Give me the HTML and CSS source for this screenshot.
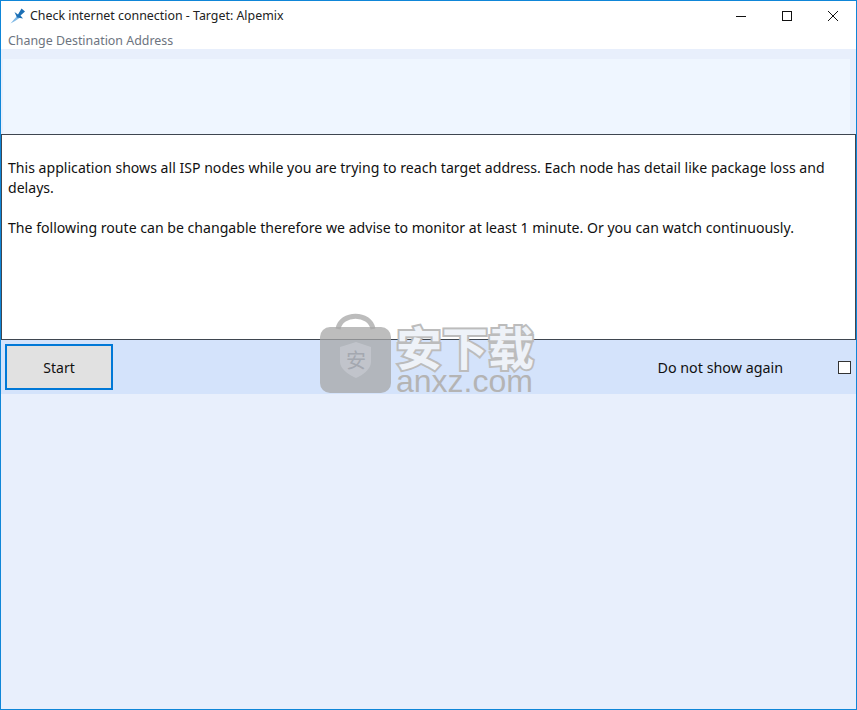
FILE: index.html
```html
<!DOCTYPE html>
<html lang="en">
<head>
  <meta charset="UTF-8">
  <title>Check internet connection - Target: Alpemix</title>
  <link rel="stylesheet" href="styles.css">
</head>
<body>
  <div class="window">
    <div class="titlebar">
      <svg class="app-icon" width="16" height="16" viewBox="0 0 16 16">
        <path d="M0.500 15.500 C3 12.500 5 10.500 7 8 L9.500 10 C6.500 12 3.500 14 0.500 15.500Z" fill="#7fb9e6"/>
        <path d="M4.500 4 L8 6.500 L11.500 0.500 L15 3.500 L10.500 7.500 L13 10.500 L7 9.500Z" fill="#1b6fb5"/>
      </svg>
      <span class="title">Check internet connection - Target: Alpemix</span>
      <div class="win-controls">
        <svg width="46" height="30" viewBox="0 0 46 30"><path d="M18 15.500H28" stroke="#111" fill="none"/></svg>
        <svg width="46" height="30" viewBox="0 0 46 30"><rect x="18.500" y="10.500" width="9" height="9" stroke="#111" fill="none"/></svg>
        <svg width="46" height="30" viewBox="0 0 46 30"><path d="M18 10L28 20M28 10L18 20" stroke="#111" fill="none"/></svg>
      </div>
    </div>
    <div class="menu">Change Destination Address</div>
    <div class="content">
      <div class="top-panel"></div>
      <div class="message">
        <p>This application shows all ISP nodes while you are trying to reach target address. Each node has detail like package loss and delays.</p>
        <p>The following route can be changable therefore we advise to monitor at least 1 minute. Or you can watch continuously.</p>
      </div>
      <div class="actions">
        <button class="start">Start</button>
        <label class="dont-show">Do not show again</label>
        <span class="check"></span>
      </div>
    </div>
    <div class="watermark">
      <svg width="72" height="82" viewBox="0 0 72 82">
        <path d="M18 16 C21 -1 50 -1 53 16" fill="none" stroke="#bcbcbc" stroke-width="5"/>
        <rect x="0" y="14" width="71" height="66" rx="10" fill="#a7a7a7" fill-opacity=".75"/>
        <path d="M36 29 L51 34 V49 C51 56 43 62 36 65 C29 62 20 56 20 49 V34Z" fill="#c8cbd2" fill-opacity=".7"/>
        <text x="36" y="55" text-anchor="middle" class="wm-shield">安</text>
      </svg>
      <div class="wm-text">
        <span class="wm-cn">安下载</span>
        <span class="wm-en">anxz.com</span>
      </div>
    </div>
  </div>
</body>
</html>
```
FILE: styles.css
```css
html, body {
  margin: 0;
  height: 100%;
}
body {
  font-family: 'Noto Sans', 'Open Sans', sans-serif;
  font-size: 14px;
  color: #111;
}
.window {
  position: relative;
  box-sizing: border-box;
  height: 710px;
  display: flex;
  flex-direction: column;
  border: 1px solid #0f86d8;
  background: #e8effc;
}
.titlebar {
  height: 29px;
  display: flex;
  align-items: center;
  background: white;
}
.app-icon {
  margin-left: 9px;
  margin-right: 4px;
}
.title {
  font-size: 12.4px;
  color: #222;
}
.win-controls {
  margin-left: auto;
  display: flex;
}
.menu {
  height: 19px;
  padding-left: 7px;
  font-size: 12.4px;
  line-height: 21px;
  color: #6d7480;
  background: white;
}
.content {
  flex: 1;
  padding-top: 10px;
}
.top-panel {
  height: 75px;
  margin: 0 6px 0 2px;
  background: #eff6ff;
}
.message {
  box-sizing: border-box;
  height: 206px;
  padding: 23px 6px 0;
  border: 1px solid #3f4650;
  background: white;
  font-size: 14.1px;
  line-height: 20px;
}
.message p {
  margin: 0 0 20px;
}
.actions {
  height: 54px;
  display: flex;
  align-items: center;
  padding: 0 4px;
  background: #d4e3fb;
}
.start {
  width: 108px;
  height: 46px;
  border: 2px solid #0078d7;
  background: #e1e1e1;
  font-family: inherit;
  font-size: 14px;
  color: #111;
}
.dont-show {
  margin-left: auto;
  margin-right: 55px;
  font-size: 14.3px;
}
.check {
  width: 11px;
  height: 11px;
  margin-right: 1px;
  border: 1px solid #333;
  background: white;
}
.watermark {
  position: absolute;
  left: 319px;
  top: 312px;
  display: flex;
  gap: 4px;
  pointer-events: none;
}
.wm-shield {
  font-family: 'Noto Sans CJK SC', sans-serif;
  font-size: 20px;
  fill: #a4a8b0;
}
.wm-text {
  display: flex;
  flex-direction: column;
  padding-top: 9px;
}
.wm-cn {
  font-family: 'Noto Sans CJK SC', sans-serif;
  font-size: 46px;
  line-height: 46px;
  font-weight: 700;
  color: #eef2f8;
  -webkit-text-stroke: 4px #bcbcbc;
  paint-order: stroke fill;
}
.wm-en {
  font-family: 'Liberation Sans', sans-serif;
  font-size: 32px;
  line-height: 26px;
  color: #b4b4b4;
}
```
